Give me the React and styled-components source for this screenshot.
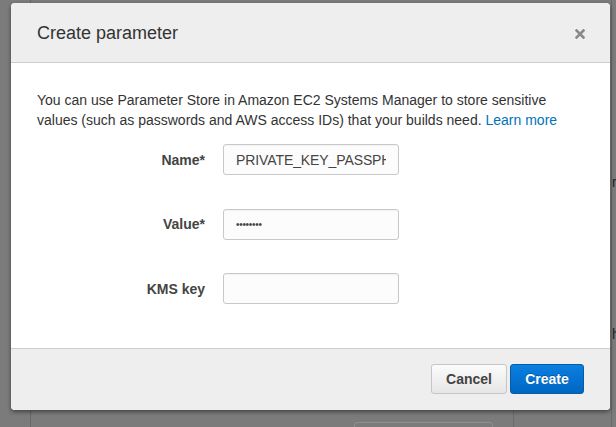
import React from "react";
import styled, { createGlobalStyle } from "styled-components";

const GlobalStyle = createGlobalStyle`
  html, body {
    margin: 0;
    padding: 0;
    background: #7b7b7b;
  }
  body {
    font-family: "Liberation Sans", Arial, Helvetica, sans-serif;
    -webkit-font-smoothing: antialiased;
  }
`;

const Screen = styled.div`
  position: relative;
  width: 616px;
  height: 427px;
  overflow: hidden;
  background: #7b7b7b;
`;

/* dimmed page behind the modal */
const Page = styled.div`
  display: grid;
  grid-template-columns: 31px 1fr 5px;
  height: 100%;
`;

const Rail = styled.div`
  border-right: 1px solid #686868;
`;

const Main = styled.div`
  display: flex;
  flex-direction: column;
  justify-content: flex-end;
`;

const PageFoot = styled.div`
  display: flex;
  align-items: flex-end;
  height: 17px;
  padding-left: 323px;
`;

const GhostBox = styled.div`
  width: 137px;
  height: 4px;
  border: 1px solid #8e8e8e;
  border-bottom: none;
  border-radius: 4px 4px 0 0;
`;

const GhostDivider = styled.div`
  align-self: stretch;
  margin-left: 20px;
  border-left: 1px solid #6c6c6c;
`;

const SidePanel = styled.div`
  border-left: 1px solid #686868;
  display: flex;
  flex-direction: column;
  padding-top: 174px;
  gap: 136px;
  font-size: 14px;
  color: #222;
  overflow: hidden;
  white-space: nowrap;
`;

const Overlay = styled.div`
  position: absolute;
  inset: 0;
  padding: 3px 0 0 11px;
`;

const Dialog = styled.div`
  width: 599px;
  background: #fff;
  border-radius: 4px;
  box-shadow: 0 2px 4px rgba(0, 0, 0, 0.45);
  overflow: hidden;
`;

const Header = styled.div`
  box-sizing: border-box;
  display: flex;
  align-items: center;
  justify-content: space-between;
  height: 60px;
  padding: 2px 25px 0 26px;
  background: #eeeeee;
  border-bottom: 1px solid #cdcdcd;
`;

const Title = styled.h2`
  margin: 0;
  font-size: 18px;
  font-weight: normal;
  color: #333;
`;

const Close = styled.button`
  display: flex;
  padding: 0;
  border: none;
  background: none;
  cursor: pointer;
`;

const Body = styled.div`
  padding: 27px 26px 44px;
`;

const Intro = styled.p`
  margin: 0 0 14px;
  font-size: 14px;
  line-height: 20px;
  color: #333;
`;

const Link = styled.a`
  color: #0073bb;
  text-decoration: none;
`;

const Form = styled.div`
  display: grid;
  grid-template-columns: 168px 176px;
  column-gap: 18px;
  row-gap: 33.5px;
  align-items: center;
`;

const Label = styled.label`
  text-align: right;
  font-size: 14px;
  font-weight: bold;
  color: #444;
`;

const Input = styled.input`
  box-sizing: border-box;
  width: 176px;
  height: 31px;
  padding: 0 12px;
  border: 1px solid #c8c8c8;
  border-radius: 3px;
  background: #fcfcfc;
  box-shadow: inset 0 1px 1px rgba(0, 0, 0, 0.04);
  font-family: "Liberation Sans", Arial, sans-serif;
  font-size: ${(p) => (p.type === "password" ? "10px" : "14px")};
  letter-spacing: ${(p) => (p.type === "password" ? "-0.3px" : "-0.1px")};
  color: #444;
  outline: none;
`;

const Footer = styled.div`
  display: flex;
  justify-content: flex-end;
  gap: 3px;
  padding: 15px 26px 16px 0;
  background: #eeeeee;
  border-top: 1px solid #cdcdcd;
`;

const Button = styled.button`
  box-sizing: border-box;
  width: ${(p) => p.$w}px;
  height: 30px;
  border-radius: 3px;
  font-family: "Liberation Sans", Arial, sans-serif;
  font-size: 14px;
  font-weight: bold;
  cursor: pointer;
  border: 1px solid ${(p) => (p.$primary ? "#0b5aa5" : "#c6c6c6")};
  color: ${(p) => (p.$primary ? "#fff" : "#444")};
  background: ${(p) =>
    p.$primary
      ? "linear-gradient(#0a7fe2, #0066c2)"
      : "linear-gradient(#fbfbfb, #e6e6e6)"};
  text-shadow: ${(p) =>
    p.$primary ? "0 -1px 0 rgba(0,0,0,0.25)" : "none"};
`;

const CloseIcon = () => (
  <svg width="10" height="10" viewBox="0 0 10 10">
    <path
      d="M1.5 1.5 L8.5 8.5 M8.5 1.5 L1.5 8.5"
      stroke="#8a8a8a"
      strokeWidth="2.6"
      strokeLinecap="square"
    />
  </svg>
);

export default function App() {
  return (
    <>
      <GlobalStyle />
      <Screen>
        <Page>
          <Rail />
          <Main>
            <PageFoot>
              <GhostBox />
              <GhostDivider />
            </PageFoot>
          </Main>
          <SidePanel>
            <span>r-</span>
            <span>h</span>
          </SidePanel>
        </Page>
        <Overlay>
          <Dialog>
            <Header>
              <Title>Create parameter</Title>
              <Close aria-label="Close">
                <CloseIcon />
              </Close>
            </Header>
            <Body>
              <Intro>
                You can use Parameter Store in Amazon EC2 Systems Manager to
                store sensitive values (such as passwords and AWS access IDs)
                that your builds need. <Link href="#">Learn more</Link>
              </Intro>
              <Form>
                <Label>Name*</Label>
                <Input readOnly defaultValue="PRIVATE_KEY_PASSPHRASE" />
                <Label>Value*</Label>
                <Input type="password" readOnly defaultValue="secret12" />
                <Label>KMS key</Label>
                <Input readOnly defaultValue="" />
              </Form>
            </Body>
            <Footer>
              <Button $w={76}>Cancel</Button>
              <Button $w={74} $primary>
                Create
              </Button>
            </Footer>
          </Dialog>
        </Overlay>
      </Screen>
    </>
  );
}
